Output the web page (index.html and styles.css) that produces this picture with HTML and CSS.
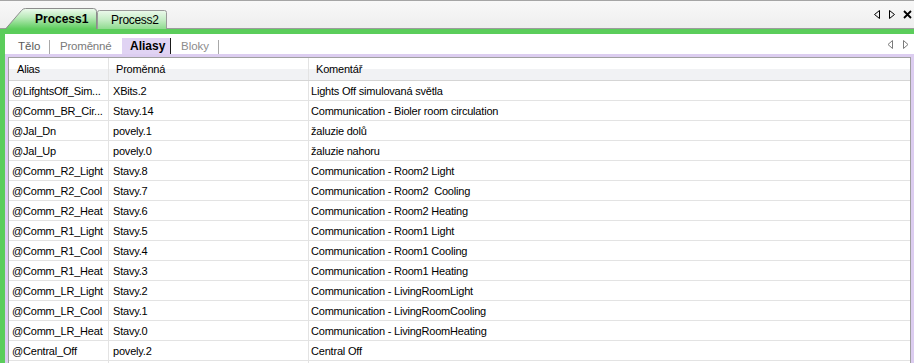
FILE: index.html
```html
<!DOCTYPE html>
<html lang="cs">
<head>
<meta charset="utf-8">
<title>Process1 - Aliasy</title>
<link rel="stylesheet" href="styles.css">
</head>
<body>
<div class="window">
  <div class="topbar">
    <div class="doc-tabs">
      <div class="doc-tab doc-tab-active">
        <svg class="tab-shape" width="92" height="21" viewBox="0 0 92 21">
          <defs>
            <linearGradient id="ga" x1="0" y1="0" x2="0" y2="1">
              <stop offset="0" stop-color="#eefaee"/>
              <stop offset="0.45" stop-color="#b7e9b7"/>
              <stop offset="1" stop-color="#5ccd5c"/>
            </linearGradient>
          </defs>
          <path d="M0.5 21 L16.5 2.5 Q18 0.5 20.5 0.5 L88.5 0.5 Q91.5 0.5 91.5 3.5 L91.5 21" fill="url(#ga)" stroke="#8c8c8c"/>
        </svg>
        <span class="doc-tab-label">Process1</span>
      </div>
      <div class="doc-tab doc-tab-other">
        <svg class="tab-shape" width="70" height="19" viewBox="0 0 70 19">
          <defs>
            <linearGradient id="gb" x1="0" y1="0" x2="0" y2="1">
              <stop offset="0" stop-color="#ecf9ec"/>
              <stop offset="0.5" stop-color="#c6edc6"/>
              <stop offset="1" stop-color="#8edb8e"/>
            </linearGradient>
          </defs>
          <path d="M0.5 19 L0.5 2.5 Q0.5 0.5 2.5 0.5 L67.5 0.5 Q69.5 0.5 69.5 2.5 L69.5 19" fill="url(#gb)" stroke="#9a9a9a"/>
        </svg>
        <span class="doc-tab-label">Process2</span>
      </div>
    </div>
    <div class="top-buttons">
      <svg width="8" height="9" viewBox="0 0 8 9"><path d="M6.5 0.5 L1.5 4.5 L6.5 8.5 Z" fill="none" stroke="#000"/></svg>
      <svg width="8" height="9" viewBox="0 0 8 9"><path d="M1.5 0.5 L6.5 4.5 L1.5 8.5 Z" fill="none" stroke="#000"/></svg>
      <svg width="9" height="9" viewBox="0 0 9 9"><path d="M1 1 L8 8 M8 1 L1 8" stroke="#000" stroke-width="1.8"/></svg>
    </div>
  </div>

  <div class="frame">
    <div class="subbar">
      <div class="subtabs">
        <span class="subtab st-telo">Tělo</span>
        <span class="sep"></span>
        <span class="subtab st-prom">Proměnné</span>
        <span class="subtab st-active">Aliasy</span>
        <span class="subtab st-bloky">Bloky</span>
        <span class="sep"></span>
      </div>
      <div class="sub-arrows">
        <svg width="7" height="9" viewBox="0 0 7 9"><path d="M5.5 0.5 L1 4.5 L5.5 8.5 Z" fill="none" stroke="#7a7a7a"/></svg>
        <svg width="7" height="9" viewBox="0 0 7 9"><path d="M1.5 0.5 L6 4.5 L1.5 8.5 Z" fill="none" stroke="#7a7a7a"/></svg>
      </div>
    </div>

    <div class="lav">
      <div class="grid">
        <div class="row head">
          <div class="cell c1">Alias</div>
          <div class="cell c2">Proměnná</div>
          <div class="cell c3">Komentář</div>
        </div>
        <div class="row"><div class="cell c1">@LifghtsOff_Sim...</div><div class="cell c2">XBits.2</div><div class="cell c3">Lights Off simulovaná světla</div></div>
        <div class="row"><div class="cell c1">@Comm_BR_Cir...</div><div class="cell c2">Stavy.14</div><div class="cell c3">Communication - Bioler room circulation</div></div>
        <div class="row"><div class="cell c1">@Jal_Dn</div><div class="cell c2">povely.1</div><div class="cell c3">žaluzie dolů</div></div>
        <div class="row"><div class="cell c1">@Jal_Up</div><div class="cell c2">povely.0</div><div class="cell c3">žaluzie nahoru</div></div>
        <div class="row"><div class="cell c1">@Comm_R2_Light</div><div class="cell c2">Stavy.8</div><div class="cell c3">Communication - Room2 Light</div></div>
        <div class="row"><div class="cell c1">@Comm_R2_Cool</div><div class="cell c2">Stavy.7</div><div class="cell c3">Communication - Room2 &nbsp;Cooling</div></div>
        <div class="row"><div class="cell c1">@Comm_R2_Heat</div><div class="cell c2">Stavy.6</div><div class="cell c3">Communication - Room2 Heating</div></div>
        <div class="row"><div class="cell c1">@Comm_R1_Light</div><div class="cell c2">Stavy.5</div><div class="cell c3">Communication - Room1 Light</div></div>
        <div class="row"><div class="cell c1">@Comm_R1_Cool</div><div class="cell c2">Stavy.4</div><div class="cell c3">Communication - Room1 Cooling</div></div>
        <div class="row"><div class="cell c1">@Comm_R1_Heat</div><div class="cell c2">Stavy.3</div><div class="cell c3">Communication - Room1 Heating</div></div>
        <div class="row"><div class="cell c1">@Comm_LR_Light</div><div class="cell c2">Stavy.2</div><div class="cell c3">Communication - LivingRoomLight</div></div>
        <div class="row"><div class="cell c1">@Comm_LR_Cool</div><div class="cell c2">Stavy.1</div><div class="cell c3">Communication - LivingRoomCooling</div></div>
        <div class="row"><div class="cell c1">@Comm_LR_Heat</div><div class="cell c2">Stavy.0</div><div class="cell c3">Communication - LivingRoomHeating</div></div>
        <div class="row"><div class="cell c1">@Central_Off</div><div class="cell c2">povely.2</div><div class="cell c3">Central Off</div></div>
        <div class="row"><div class="cell c1"></div><div class="cell c2"></div><div class="cell c3"></div></div>
      </div>
    </div>
  </div>
</div>
</body>
</html>
```

FILE: styles.css
```css
* { box-sizing: border-box; }

html, body {
  margin: 0;
  padding: 0;
  width: 914px;
  height: 363px;
  overflow: hidden;
  background: #ffffff;
}

body {
  font-family: "Liberation Sans", Arial, sans-serif;
  font-size: 11px;
  color: #000;
}

.window {
  width: 914px;
  height: 363px;
  display: flex;
  flex-direction: column;
  overflow: hidden;
}

/* ---------- top document tab bar ---------- */
.topbar {
  height: 29px;
  flex: none;
  display: flex;
  justify-content: space-between;
  align-items: flex-end;
  background: linear-gradient(#f8f8f8, #eeeeee);
  border-top: 1px solid #a5a5a5;
  border-bottom: 1px solid #9c9c9c;
}

.doc-tabs {
  display: flex;
  align-items: flex-end;
  padding-left: 5px;
  margin-bottom: -1px;
}

.doc-tab {
  position: relative;
  display: flex;
  align-items: center;
  font-size: 12px;
}

.tab-shape {
  position: absolute;
  left: 0;
  top: 0;
}

.doc-tab-label {
  position: relative;
}

.doc-tab-active {
  width: 92px;
  height: 21px;
  padding-left: 30px;
  padding-top: 1px;
  font-weight: bold;
}

.doc-tab-other {
  width: 70px;
  height: 19px;
  padding-left: 14px;
  letter-spacing: -0.3px;
}

.top-buttons {
  align-self: center;
  display: flex;
  align-items: center;
  gap: 7px;
  padding-right: 2px;
}

.top-buttons svg { display: block; }

/* ---------- green frame ---------- */
.frame {
  flex: 1;
  display: flex;
  flex-direction: column;
  border-top: 5px solid #5bcd5b;
  border-left: 5px solid #5bcd5b;
  min-height: 0;
}

.subbar {
  height: 20px;
  flex: none;
  display: flex;
  justify-content: space-between;
  background: #ffffff;
}

.subtabs {
  display: flex;
  align-items: stretch;
}

.subtab {
  display: flex;
  align-items: center;
  margin-top: 4px;
  height: 16px;
  font-size: 11.5px;
  white-space: nowrap;
}

.st-telo {
  width: 44px;
  padding-left: 13px;
  color: #5a5a5a;
}

.st-prom {
  width: 72px;
  padding-left: 10px;
  color: #7a7a7a;
  letter-spacing: -0.2px;
}

.st-active {
  width: 49px;
  padding-left: 8px;
  font-size: 12px;
  font-weight: bold;
  color: #000;
  background: #e0d3f3;
  border-right: 1px solid #1a1a1a;
}

.st-bloky {
  width: 47px;
  padding-left: 10px;
  color: #8c8c8c;
}

.sep {
  width: 1px;
  height: 14px;
  margin-top: 6px;
  background: #a8a8a8;
}

.sub-arrows {
  display: flex;
  align-items: center;
  gap: 8px;
  padding-right: 5px;
  padding-top: 1px;
}

.sub-arrows svg { display: block; }

/* ---------- lavender band + grid ---------- */
.lav {
  flex: 1;
  min-height: 0;
  background: #dccdf0;
  padding: 3px 3px 0 3px;
  display: flex;
}

.grid {
  flex: 1;
  background: #ffffff;
  border-top: 1px solid #a0a0a0;
  border-left: 1px solid #a0a0a0;
  border-right: 1px solid #a0a0a0;
  overflow: hidden;
}

.row {
  display: flex;
  height: 20px;
  border-bottom: 1px solid #e3e3e3;
}

.row.head {
  height: 23px;
  border-bottom: 1px solid #d5d5d5;
  background: linear-gradient(#ffffff 0%, #ffffff 50%, #f1f2f4 50%, #f1f2f4 100%);
}

.cell {
  display: flex;
  align-items: center;
  white-space: nowrap;
  overflow: hidden;
  border-right: 1px solid #e3e3e3;
  letter-spacing: -0.2px;
}

.c1 { width: 100px; padding-left: 3px; }
.c2 { width: 200px; padding-left: 4px; }
.c3 { flex: 1; padding-left: 2px; border-right: none; }

.head .c1 { padding-left: 8px; }
.head .c2 { padding-left: 7px; }
.head .c3 { padding-left: 7px; }
```
